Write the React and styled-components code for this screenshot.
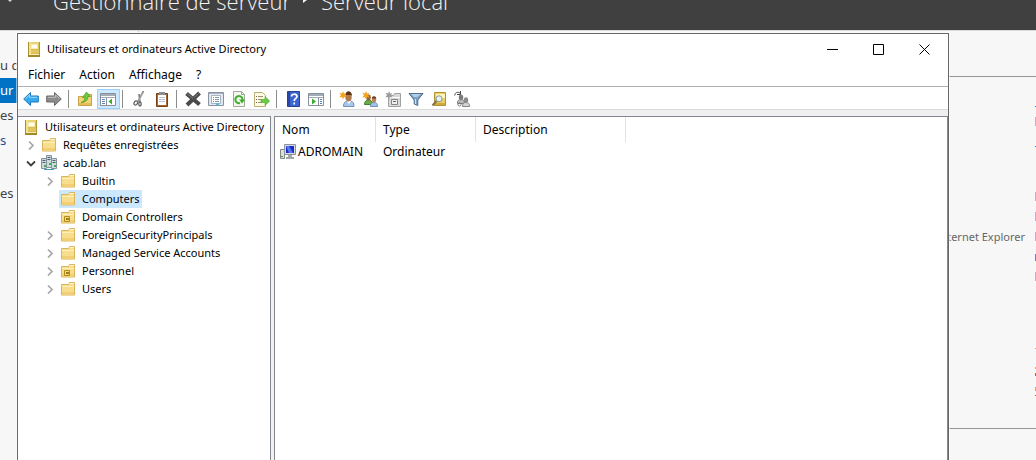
import React from 'react';
import styled, { createGlobalStyle, css } from 'styled-components';

const Global = createGlobalStyle`
  * { box-sizing: border-box; }
  html, body, #root { height: 100%; }
  body {
    margin: 0;
    background: #f7f7f7;
    color: #000;
    font: 12px/18px "Noto Sans", "Open Sans", sans-serif;
    overflow: hidden;
  }
  button { font: inherit; color: inherit; background: none; border: 0; padding: 0; }
  ul { list-style: none; margin: 0; padding: 0; }
`;

/* ---------- Server manager, behind the window ---------- */
const Desktop = styled.div`
  position: relative;
  display: flex;
  flex-direction: column;
  min-height: 100vh;
`;
const Banner = styled.header`
  flex: none;
  display: flex;
  align-items: flex-end;
  height: 31px;
  padding: 0 0 13px 8px;
  overflow: hidden;
  background: #404040;
  border-bottom: 1px solid #d8d8d8;
  color: #f4f4f4;
  font: 300 22px/32px "Open Sans", sans-serif;
  white-space: nowrap;
`;
const BackMark = styled.svg`
  align-self: flex-start;
  flex: none;
  margin-right: 41px;
`;
const CrumbArrow = styled.svg`
  align-self: flex-start;
  flex: none;
  margin: 0 13px 0 12px;
`;
const Backdrop = styled.div`
  flex: 1;
  display: flex;
`;
const SideNav = styled.nav`
  width: 139px;
  padding-top: 22px;
  border-right: 1px solid #c8c8c8;
  overflow: hidden;
`;
const NavLink = styled.a`
  display: block;
  height: 25px;
  margin-bottom: ${p => p.$gap || 0}px;
  color: ${p => (p.$active ? '#fff' : p.$accent ? '#1b4f9c' : '#444')};
  background: ${p => (p.$active ? '#0072c6' : 'transparent')};
  font-size: 13px;
  line-height: 25px;
  text-decoration: none;
  white-space: nowrap;
`;
const Details = styled.main`
  flex: 1;
  display: flex;
  flex-direction: column;
`;
const DetailBlock = styled.section`
  display: flex;
  justify-content: flex-end;
  height: ${p => p.$height}px;
  border-bottom: 1px solid #969696;
`;
const DetailText = styled.p`
  margin: 151px 10px 0 0;
  color: #666;
  font-size: 11px;
`;

/* ---------- Window ---------- */
const Window = styled.section`
  position: absolute;
  top: 33px;
  left: 17px;
  right: 87px;
  bottom: 0;
  display: flex;
  flex-direction: column;
  background: #fff;
  border: 1px solid #68686a;
  border-bottom: 0;
  box-shadow: 0 0 0 1px #fff8;
`;
const TitleBar = styled.header`
  flex: none;
  display: flex;
  align-items: center;
  height: 30px;
  padding-left: 8px;
`;
const Title = styled.h1`
  flex: 1;
  margin: 0 0 0 5px;
  font-size: 11px;
  font-weight: 400;
`;
const CaptionButton = styled.button`
  display: grid;
  place-items: center;
  width: 46px;
  height: 30px;
  padding-right: 1px;
`;
const MenuBar = styled.nav`
  flex: none;
  display: flex;
  height: 23px;
  padding-left: 3px;
  border-bottom: 1px solid #b0b0b0;
`;
const MenuItem = styled.button`
  padding: 0 7px;
  line-height: 22px;
`;
const Toolbar = styled.div`
  flex: none;
  display: flex;
  align-items: center;
  height: 23px;
  padding: 1px 0 0 2px;
  border-bottom: 1px solid #dadada;
`;
const ToolButton = styled.button`
  display: grid;
  place-items: center;
  width: 23px;
  height: 20px;
  padding-right: 1px;
  ${p => p['aria-pressed'] && css`
    background: #cce8ff;
    box-shadow: inset 0 0 0 1px #99d1ff;
  `}
`;
const Separator = styled.span`
  width: 1px;
  height: 18px;
  margin: 0 5px 0 2px;
  background: #8c8c8c;
`;
const Panes = styled.div`
  flex: 1;
  display: flex;
  gap: 3px;
  padding-top: 6px;
  background: #f0f0f0;
`;
const Pane = styled.div`
  background: #fff;
  border: solid #828790;
  border-width: 1px 1px 0;
`;
const TreePane = styled(Pane)`
  flex: none;
  width: 253px;
  padding-top: 1px;
  border-left: 0;
  font-size: 11px;
`;
const ListPane = styled(Pane)`
  flex: 1;
`;
const TreeRow = styled.li`
  display: flex;
  align-items: center;
  height: 18px;
  padding-left: ${p => p.$level * 19 - 12}px;
`;
const Toggle = styled.button`
  display: grid;
  place-items: center;
  width: 11px;
  height: 18px;
  margin-right: 4px;
`;
const TreeLabel = styled.button`
  display: flex;
  align-items: center;
  gap: 6px;
  height: 18px;
  padding: 0 3px 0 1px;
  background: ${p => (p.$selected ? '#cce8ff' : 'transparent')};
  white-space: nowrap;
`;
const Root = styled(TreeRow)`
  padding-left: 4px;
`;
const List = styled.table`
  width: 100%;
  table-layout: fixed;
  border-collapse: separate;
  border-spacing: 0;
  th, td { padding: 0 0 0 7px; text-align: left; font-weight: 400; white-space: nowrap; }
  th { height: 25px; border-right: 1px solid #e2e2e2; }
  th:last-child { border-right: 0; }
  td { height: 20px; }
`;
const Column = styled.col`
  width: ${p => p.$width};
`;
const NameCell = styled.span`
  display: flex;
  align-items: center;
  gap: 2px;
  margin-left: -2px;
`;

/* ---------- Icons ---------- */
const Svg = ({ children }) => (
  <svg width="16" height="16" viewBox="0 0 16 16" fill="none" aria-hidden="true">{children}</svg>
);
const Arrow = ({ fill, stroke, light, flip }) => (
  <Svg>
    <g transform={flip ? 'matrix(-1 0 0 1 16 0)' : undefined}>
      <path d="M.7 8 7.500 1.500v3.500h7.800v6H7.500v3.500z" fill={fill} stroke={stroke} />
      <path d="M2.400 7.700 6.600 3.800v2.500h7.600" stroke={light} />
    </g>
  </Svg>
);
const Console = () => (
  <Svg>
    <path d="M2 1h12v15H2z" fill="#d9bd50" />
    <path d="M2 1h1v15H2z" fill="#a98f35" />
    <path d="M3 1h2v12H3z" fill="#f3e28c" />
    <path d="M5 1h8v2H5z" fill="#e9d374" />
    <path d="M13 1h1v14h-1z" fill="#b3983a" />
    <path d="M5.500 3.500h6v4h-6z" fill="#fffdf0" stroke="#f6ecb4" />
    <path d="M5 9h8v3H5z" fill="#e0c660" />
    <path d="M3 13h10v1H3z" fill="#f8efb8" />
    <path d="M2 14h12v2H2z" fill="#a58728" />
  </Svg>
);
const folderShape = (
  <>
    <path d="M1.500 3.500h7l1-2h5v12.500h-13z" fill="#f8dd8c" stroke="#d8b55e" />
    <path d="M9.500 2.500h4.500" stroke="#fff6d0" />
    <path d="M2 5h12v1H2z" fill="#fff0b8" />
    <path d="M2 11h12v3H2z" fill="#f2cf74" />
  </>
);
const Folder = () => <Svg>{folderShape}</Svg>;
const UnitFolder = () => (
  <Svg>
    {folderShape}
    <path d="M4.500 7.500h5v5h-5z" fill="#f4d968" stroke="#b08d22" />
    <path d="M6 9h3v2H6z" fill="#a07c18" />
  </Svg>
);
const Domain = () => (
  <Svg>
    <path d="M5.500.5h5v12h-5zM.5 3.500h5v10h-5zM10.500 3.500h5v10h-5z" fill="#cfd9de" stroke="#83939c" />
    <path d="M6.500 2.500h3M6.500 4.500h3M1.500 5.500h3M1.500 7.500h3M11.500 5.500h3M11.500 7.500h3" stroke="#4b6575" />
    <path d="M3 10h2v2H3zM8 8h2v2H8zM13 10h2v2h-2z" fill="#35b44a" />
    <path d="M3 14.500h10" stroke="#3f9fc0" />
  </Svg>
);
const Computer = () => (
  <Svg>
    <path d="M.5 5.500h4v9h-4z" fill="#dce2d8" stroke="#7d8880" />
    <path d="M1 12h2v1H1z" fill="#3a9c3a" />
    <path d="M4.500.5h11v10h-11z" fill="#d8d8e0" stroke="#9292a0" />
    <path d="M6 2h8v7H6z" fill="#1430c8" />
    <path d="M6 2h3l4 7H9z" fill="#5878f0" />
    <path d="M8 11h4v2h2v2H6v-2h2z" fill="#a3a7ae" />
  </Svg>
);
const FolderUp = () => (
  <Svg>
    <path d="M1.500 5.500h7l1-2h5v11h-13z" fill="#f3d377" stroke="#caa144" />
    <path d="M2 12h12v2H2z" fill="#e7bd58" />
    <path d="M4 11.500c3-1 4-3 4-5H5.500L9.500 1l4 4.500h-2.500C11 9 8.500 11.500 4 11.500z" fill="#6cc83e" stroke="#4a9b27" strokeWidth=".7" />
  </Svg>
);
const PanelIcon = ({ right }) => (
  <Svg>
    <path d="M.5 2.500h15v12H.5z" fill="#fff" stroke="#87909c" />
    <path d="M1 3h14v2H1z" fill="#a4acb8" />
    <path d="M1 6.500h14" stroke="#a4acb8" />
    {right ? (
      <>
        <path d="M10.500 7v7" stroke="#87909c" />
        <path d="M12 8.500h2M12 10.500h2M12 12.500h2" stroke="#4f83c4" />
        <path d="M4 7.500v6L8 10.500z" fill="#38ad2e" />
      </>
    ) : (
      <>
        <path d="M6.500 7v7" stroke="#87909c" />
        <path d="M2 8.500h3M2 10.500h3M2 12.500h3" stroke="#6688b0" />
        <path d="M12 7.500v6L8.500 10.500z" fill="#38ad2e" />
      </>
    )}
  </Svg>
);
const Cut = () => (
  <Svg>
    <path d="M12.500 0 7 10.500M8 3l1 8.500" stroke="#848484" strokeWidth="1.700" />
    <path d="M12 1.500 7.500 10" stroke="#c8c8c8" strokeWidth=".6" />
    <ellipse cx="4.800" cy="12" rx="1.700" ry="2.200" transform="rotate(35 4.800 12)" stroke="#5f5f5f" strokeWidth="1.300" />
    <ellipse cx="9" cy="13" rx="1.200" ry="2" stroke="#5f5f5f" strokeWidth="1.300" />
  </Svg>
);
const Paste = () => (
  <Svg>
    <path d="M2.500 2.500h11v13h-11z" fill="#a9672e" stroke="#75421a" />
    <path d="M4 4h8v10H4z" fill="#fff" />
    <path d="M5 1h6v3H5z" fill="#8c8c94" />
    <path d="M5 6.500h6M5 8.500h6M5 10.500h6" stroke="#b4c3d8" />
  </Svg>
);
const Delete = () => (
  <Svg>
    <path d="m1.500 2.500 13 11M14.500 2 2 14" stroke="#4a4a4a" strokeWidth="4" />
    <path d="m2 2.500 6 5M13.500 2.500 9 6.500" stroke="#808080" />
  </Svg>
);
const Properties = () => (
  <Svg>
    <path d="M.5 1.500h15v13H.5z" fill="#e3e8ee" stroke="#8694a2" />
    <path d="M3.500 4.500h9v8h-9z" fill="#fff" stroke="#a6b2bf" />
    <path d="M1 2.500h14" stroke="#aab5c1" />
    <path d="M5 6.500h1M5 8.500h1M5 10.500h1" stroke="#3f9fd0" />
    <path d="M7 6.500h4M7 8.500h4M7 10.500h4" stroke="#8496a8" />
    <path d="M8 12h3v2H8z" fill="#62b6dc" />
  </Svg>
);
const Refresh = () => (
  <Svg>
    <path d="M2.500.5h8l3 3v12h-11z" fill="#f6f6f2" stroke="#a3a79b" />
    <path d="M10.500.5v3h3" stroke="#a3a79b" />
    <path d="M9 12A3.600 3.600 0 1 1 11.500 9" stroke="#3cb02d" strokeWidth="2" />
    <path d="M8 8.500h6L11 12.500z" fill="#3cb02d" />
  </Svg>
);
const Export = () => (
  <Svg>
    <path d="M.5 1.500h8l3 3v11H.5z" fill="#fffbe2" stroke="#bcae77" />
    <path d="M2 5.500h1M2 8.500h1M2 11.500h1" stroke="#666" />
    <path d="M4 5.500h5M4 8.500h4M4 11.500h4" stroke="#9f936c" />
    <path d="M7 8.500h4V5.500l4.700 4.500-4.700 4.500v-3H7z" fill="#67cd42" stroke="#4ca92d" strokeWidth=".6" />
  </Svg>
);
const Help = () => (
  <Svg>
    <path d="M2.500.5h12v15h-12z" fill="#3c65cf" stroke="#27418f" />
    <path d="M3 1h2v14H3z" fill="#2947a4" />
    <path d="M6.500 5.500c0-3 5.500-3 5.500-.2C12 7.500 9.200 7.300 9.200 10M9.200 11.500v2" stroke="#fff" strokeWidth="1.700" />
  </Svg>
);
const starShape = 'm4 0 1 2.500L7.500 2 6 4l1.500 2.500L5 6 4 8.500 3 6 .3 6.500 2 4 .3 1.800 3 2.500z';
const User = () => (
  <Svg>
    <path d="M4.500 15.500c0-4 2-5.500 5.500-5.500s5 1.500 5 5.500z" fill="#a9c9ea" stroke="#7090b5" />
    <path d="m8 10 2 3 2-3z" fill="#fff" />
    <ellipse cx="9.500" cy="6" rx="3.200" ry="4.400" fill="#b07a4a" />
    <path d="M6.500 4c0-5 6.500-5 6.500 1l-1-1H8z" fill="#593516" />
    <path d={starShape} fill="#f5a31c" />
  </Svg>
);
const Users = () => (
  <Svg>
    <path d="M2.500 13.500c0-3 1.500-4.500 4-4.500s4 1.500 4 4.500z" fill="#67ad46" stroke="#43802e" />
    <ellipse cx="6.500" cy="6.500" rx="2.300" ry="3" fill="#9a6337" />
    <path d="M8.500 15.500c0-3 1-4 3.500-4s3.500 1 3.500 4z" fill="#a2c4e6" stroke="#6f90b8" />
    <ellipse cx="12" cy="8.500" rx="2.200" ry="3" fill="#b98757" />
    <path d="M9.800 7.500c.3-3 4.100-3 4.500 0z" fill="#65411f" />
    <path d={starShape} fill="#f5a31c" />
  </Svg>
);
const Unit = () => (
  <Svg>
    <path d="M3.500 4.500h5l1-2h6v13h-12z" fill="#dadada" stroke="#a0a0a0" />
    <path d="M4 6.500h11" stroke="#fff" />
    <path d="M6.500 8.500h6v5h-6z" fill="#eee" stroke="#858585" />
    <path d="M8 10h3v1H8z" fill="#666" />
    <path d={starShape} fill="#9c9c9c" />
  </Svg>
);
const Filter = () => (
  <Svg>
    <path d="M1 2.500h14L9.800 9v5.500L6.200 13V9z" fill="#7d9fc2" stroke="#4e7094" />
    <path d="M3 3h10L9 6H6z" fill="#b7cee4" />
    <path d="M7.500 8v5" stroke="#d0e0ee" />
  </Svg>
);
const Find = () => (
  <Svg>
    <path d="M3.500 1.500h11v13h-11z" fill="#ecce61" stroke="#b29232" />
    <path d="M5 3h9v4H5z" fill="#fff4b8" />
    <path d="M4 12h10v2H4z" fill="#d1ab3d" />
    <path d="m5.500 10-4 4.500" stroke="#8a7048" strokeWidth="2" />
    <circle cx="8" cy="7.800" r="3" fill="#e6f4fc" stroke="#82969f" />
  </Svg>
);
const AddGroup = () => (
  <Svg>
    <path d="M.8 4.500c0-3 3-4 5-2.500M6.500 0v3.500H3" stroke="#444" />
    <path d="M3.500 12.500c0-3 1-4 3.500-4s3.500 1 3.500 4z" fill="#bcbcbc" stroke="#7c7c7c" />
    <ellipse cx="7" cy="6.300" rx="2.200" ry="2.700" fill="#7b7b7b" />
    <path d="M8.500 15.500c0-3 1-4 3.500-4s3.500 1 3.500 4z" fill="#d5d5d5" stroke="#858585" />
    <ellipse cx="12" cy="9" rx="2.200" ry="2.800" fill="#8b8b8b" />
    <circle cx="5.500" cy="13.500" r="1.500" stroke="#777" />
  </Svg>
);
const Chevron = ({ open }) => (
  <svg width="10" height="10" viewBox="0 0 10 10" fill="none" aria-hidden="true">
    <path d={open ? 'M1 3.500l4 4 4-4' : 'M3 1.500l4 4-4 4'} stroke={open ? '#404040' : '#a6a6a6'} strokeWidth={open ? 1.800 : 1.700} />
  </svg>
);
const Caption = ({ d }) => (
  <svg width="11" height="11" viewBox="0 0 11 11" fill="none" aria-hidden="true"><path d={d} stroke="#000" /></svg>
);
/* Leading edge of the column of values cut by the screen's border */
const ValueEdge = () => (
  <svg width="1" height="340" aria-hidden="true">
    <path d="M0 29h1v1H0zM0 69h1v1H0z" fill="#2a7fb0" />
    <path d="M0 40h1v9H0zM0 115h1v9H0zM0 135h1v9H0zM0 155h1v9H0zM0 195h1v9H0z" fill="#d5a8c0" />
    <path d="M0 177h1v7H0z" fill="#8a78a8" />
    <path d="M0 271h1v1H0zM0 290h1v2H0zM0 310h1v4H0z" fill="#e0a070" />
    <path d="M0 296h1v3H0zM0 318h1v1H0z" fill="#a06058" />
  </svg>
);

const tools = [
  [['Précédent', <Arrow fill="#35aaf0" stroke="#1b78bc" light="#9bdcff" />], ['Suivant', <Arrow flip fill="#8c8c8c" stroke="#686868" light="#c2c2c2" />]],
  [['Dossier parent', <FolderUp />], ['Arborescence', <PanelIcon />, true]],
  [['Couper', <Cut />], ['Coller', <Paste />]],
  [['Supprimer', <Delete />], ['Propriétés', <Properties />], ['Actualiser', <Refresh />], ['Exporter', <Export />]],
  [['Aide', <Help />], ['Volet Actions', <PanelIcon right />]],
  [['Nouvel utilisateur', <User />], ['Nouveau groupe', <Users />], ['Nouvelle unité', <Unit />], ['Filtre', <Filter />], ['Rechercher', <Find />], ['Ajouter à un groupe', <AddGroup />]],
];
const tree = [
  { level: 1, label: 'Requêtes enregistrées', icon: <Folder />, toggle: 'closed' },
  { level: 1, label: 'acab.lan', icon: <Domain />, toggle: 'open' },
  { level: 2, label: 'Builtin', icon: <Folder />, toggle: 'closed' },
  { level: 2, label: 'Computers', icon: <Folder />, selected: true },
  { level: 2, label: 'Domain Controllers', icon: <UnitFolder /> },
  { level: 2, label: 'ForeignSecurityPrincipals', icon: <Folder />, toggle: 'closed' },
  { level: 2, label: 'Managed Service Accounts', icon: <Folder />, toggle: 'closed' },
  { level: 2, label: 'Personnel', icon: <UnitFolder />, toggle: 'closed' },
  { level: 2, label: 'Users', icon: <Folder />, toggle: 'closed' },
];

export default function App() {
  return (
    <Desktop>
      <Global />
      <Banner>
        <BackMark width="4" height="4" aria-hidden="true"><path d="M0 0h4L2 2z" fill="#d8d8d8" /></BackMark>
        <span>Gestionnaire de serveur</span>
        <CrumbArrow width="5" height="8" aria-hidden="true"><path d="M0 0h4L0 3z" fill="#f4f4f4" /></CrumbArrow>
        <span>Serveur local</span>
      </Banner>
      <Backdrop>
        <SideNav>
          <NavLink href="#dashboard">u d</NavLink>
          <NavLink href="#local" $active>ur l</NavLink>
          <NavLink href="#all">es s</NavLink>
          <NavLink href="#ad" $accent $gap={28}>s</NavLink>
          <NavLink href="#files">es d</NavLink>
        </SideNav>
        <Details>
          <DetailBlock $height={46} />
          <DetailBlock $height={352}>
            <DetailText>ternet Explorer</DetailText>
            <ValueEdge />
          </DetailBlock>
        </Details>
      </Backdrop>
      <Window>
        <TitleBar>
          <Console />
          <Title>Utilisateurs et ordinateurs Active Directory</Title>
          <CaptionButton aria-label="Réduire"><Caption d="M0 5.500h11" /></CaptionButton>
          <CaptionButton aria-label="Agrandir"><Caption d="M.5.5h10v10H.5z" /></CaptionButton>
          <CaptionButton aria-label="Fermer"><Caption d="m.5.5 10 10m0-10-10 10" /></CaptionButton>
        </TitleBar>
        <MenuBar>
          {['Fichier', 'Action', 'Affichage', '?'].map(m => <MenuItem key={m}>{m}</MenuItem>)}
        </MenuBar>
        <Toolbar role="toolbar">
          {tools.map((group, i) => (
            <React.Fragment key={i}>
              {i > 0 && <Separator />}
              {group.map(([label, icon, pressed]) => (
                <ToolButton key={label} aria-label={label} aria-pressed={pressed}>{icon}</ToolButton>
              ))}
            </React.Fragment>
          ))}
        </Toolbar>
        <Panes>
          <TreePane>
            <ul>
              <Root><TreeLabel><Console />Utilisateurs et ordinateurs Active Directory</TreeLabel></Root>
              {tree.map(n => (
                <TreeRow key={n.label} $level={n.level}>
                  <Toggle aria-label={n.label} disabled={!n.toggle}>
                    {n.toggle && <Chevron open={n.toggle === 'open'} />}
                  </Toggle>
                  <TreeLabel $selected={n.selected}>{n.icon}{n.label}</TreeLabel>
                </TreeRow>
              ))}
            </ul>
          </TreePane>
          <ListPane>
            <List>
              <colgroup><Column $width="101px" /><Column $width="100px" /><Column $width="150px" /><Column $width="auto" /></colgroup>
              <thead><tr><th>Nom</th><th>Type</th><th>Description</th><th aria-label="Vide" /></tr></thead>
              <tbody><tr><td><NameCell><Computer />ADROMAIN</NameCell></td><td>Ordinateur</td><td /><td /></tr></tbody>
            </List>
          </ListPane>
        </Panes>
      </Window>
    </Desktop>
  );
}
